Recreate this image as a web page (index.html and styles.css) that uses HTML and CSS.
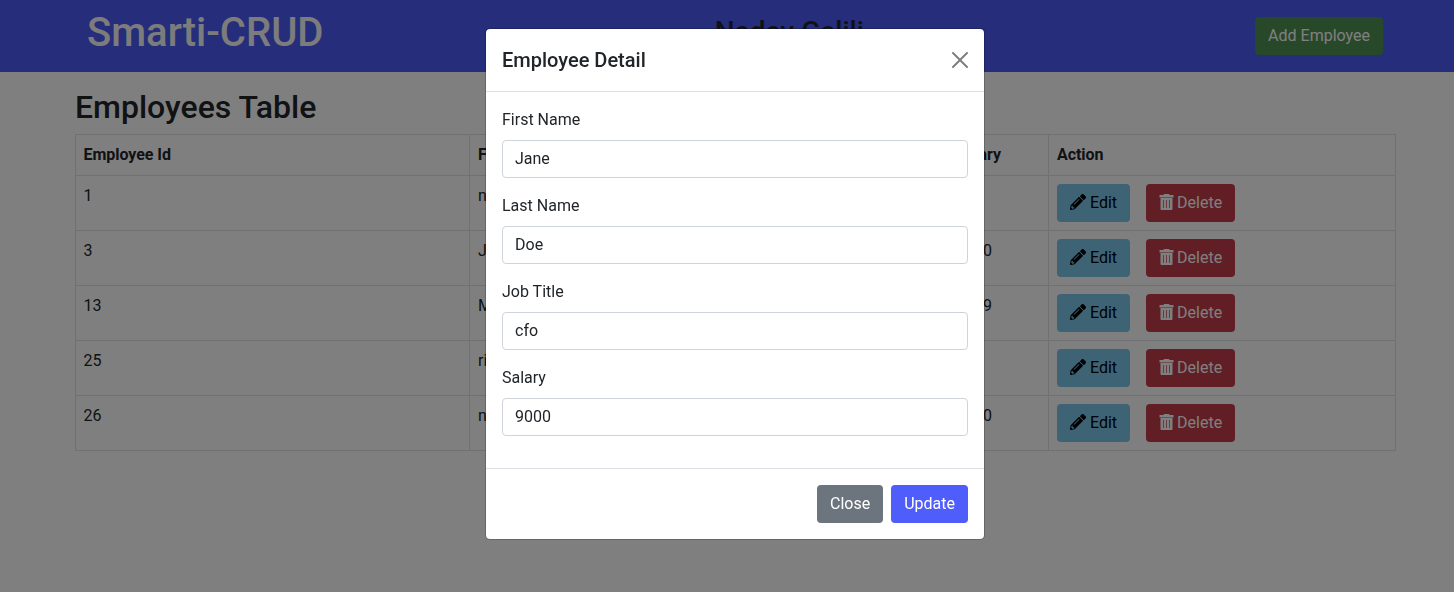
FILE: index.html
```html
<!DOCTYPE html>
<html lang="en">
<head>
<meta charset="utf-8">
<title>Smarti-CRUD</title>
<link rel="stylesheet" href="styles.css">
</head>
<body>
<svg class="sprite" aria-hidden="true">
  <symbol id="pencil" viewBox="0 0 512 512"><path d="M497.900 142.100l-46.100 46.100c-4.700 4.700-12.300 4.700-17 0l-111-111c-4.700-4.700-4.700-12.300 0-17l46.100-46.100c18.700-18.700 49.100-18.700 67.900 0l60.100 60.100c18.800 18.700 18.800 49.100 0 67.900zM284.200 99.800L21.600 362.400.4 483.900c-2.900 16.400 11.400 30.600 27.800 27.800l121.500-21.300 262.600-262.600c4.700-4.700 4.700-12.300 0-17l-111-111c-4.800-4.700-12.400-4.700-17.100 0zM124.100 339.900c-5.500-5.500-5.500-14.300 0-19.800l154-154c5.500-5.500 14.300-5.500 19.800 0s5.500 14.300 0 19.800l-154 154c-5.500 5.500-14.300 5.500-19.800 0zM88 424h48v36.300l-64.500 11.300-31.100-31.100L51.700 376H88v48z"/></symbol>
  <symbol id="trash" viewBox="0 0 15 16"><path fill-rule="evenodd" d="M5 0h5l.7 1H14.500v2.500H.5V1h3.800zM1.500 4h12v11q0 1-1 1h-10q-1 0-1-1zM4.200 6v8h.7V6zM7.150 6v8h.7V6zM10.100 6v8h.7V6z"/></symbol>
</svg>

<nav class="navbar">
  <h1 class="brand">Smarti-CRUD</h1>
  <h3 class="owner">Nadav Galili</h3>
  <button class="btn btn-success">Add Employee</button>
</nav>

<main class="content">
  <h2 class="heading">Employees Table</h2>
  <table class="table">
    <colgroup><col class="col-id"><col class="col-first"><col class="col-last"><col class="col-job"><col class="col-salary"><col class="col-action"></colgroup>
    <thead><tr><th>Employee Id</th><th>First Name</th><th>Last Name</th><th>Job Title</th><th>Salary</th><th>Action</th></tr></thead>
    <tbody>
      <tr><td>1</td><td>nadav</td><td>galili</td><td>ceo</td><td>900</td><td><div class="actions"><button class="btn btn-info"><svg class="icon"><use href="#pencil"/></svg> Edit</button><button class="btn btn-danger"><svg class="icon icon-trash"><use href="#trash"/></svg> Delete</button></div></td></tr>
      <tr><td>3</td><td>Jane</td><td>Doe</td><td>cfo</td><td>9000</td><td><div class="actions"><button class="btn btn-info"><svg class="icon"><use href="#pencil"/></svg> Edit</button><button class="btn btn-danger"><svg class="icon icon-trash"><use href="#trash"/></svg> Delete</button></div></td></tr>
      <tr><td>13</td><td>Moshe</td><td>Levi</td><td>cto</td><td>9999</td><td><div class="actions"><button class="btn btn-info"><svg class="icon"><use href="#pencil"/></svg> Edit</button><button class="btn btn-danger"><svg class="icon icon-trash"><use href="#trash"/></svg> Delete</button></div></td></tr>
      <tr><td>25</td><td>rina</td><td>cohen</td><td>dev</td><td>800</td><td><div class="actions"><button class="btn btn-info"><svg class="icon"><use href="#pencil"/></svg> Edit</button><button class="btn btn-danger"><svg class="icon icon-trash"><use href="#trash"/></svg> Delete</button></div></td></tr>
      <tr><td>26</td><td>noa</td><td>bar</td><td>dev</td><td>8000</td><td><div class="actions"><button class="btn btn-info"><svg class="icon"><use href="#pencil"/></svg> Edit</button><button class="btn btn-danger"><svg class="icon icon-trash"><use href="#trash"/></svg> Delete</button></div></td></tr>
    </tbody>
  </table>
</main>

<div class="backdrop">
  <div class="modal" role="dialog">
    <div class="modal-header">
      <h5 class="modal-title">Employee Detail</h5>
      <svg class="close" viewBox="0 0 16 16"><path d="M.293.293a1 1 0 011.414 0L8 6.586 14.293.293a1 1 0 111.414 1.414L9.414 8l6.293 6.293a1 1 0 01-1.414 1.414L8 9.414l-6.293 6.293a1 1 0 01-1.414-1.414L6.586 8 .293 1.707a1 1 0 010-1.414z"/></svg>
    </div>
    <div class="modal-body">
      <div class="field"><label for="first">First Name</label><input id="first" value="Jane"></div>
      <div class="field"><label for="last">Last Name</label><input id="last" value="Doe"></div>
      <div class="field"><label for="job">Job Title</label><input id="job" value="cfo"></div>
      <div class="field"><label for="salary">Salary</label><input id="salary" value="9000"></div>
    </div>
    <div class="modal-footer">
      <button class="btn btn-secondary">Close</button>
      <button class="btn btn-primary">Update</button>
    </div>
  </div>
</div>
</body>
</html>
```
FILE: styles.css
```css
* { box-sizing: border-box; }
body {
  margin: 0;
  height: 592px;
  overflow: hidden;
  font: 400 16px/24px Roboto, sans-serif;
  color: #212529;
  background: #fff;
}
h1, h2, h3, h5 { margin: 0; font-weight: 500; line-height: 1.2; }
.sprite { display: none; }
.navbar {
  display: flex;
  justify-content: space-between;
  align-items: flex-start;
  height: 72px;
  padding: 8px 71px 0 87px;
  background: #4c5af5;
}
.brand { font-size: 40px; margin-top: 1px; color: #f8f9fa; }
.owner { font-size: 28px; margin-top: 7px; }
.btn {
  display: inline-block;
  height: 38px;
  padding: 6px 12px;
  border: 1px solid transparent;
  border-radius: 4px;
  font: inherit;
  color: #fff;
  white-space: nowrap;
}
.btn-success { margin-top: 9px; background: #4f9052; }
.btn-info { background: #7ac6e8; color: #000; }
.btn-danger { background: #c23c4b; }
.btn-secondary { background: #6c757d; }
.btn-primary { background: #4f5dfa; }
.icon { width: 16px; height: 16px; fill: currentColor; vertical-align: -2px; }
.icon-trash { width: 15px; margin-right: -1px; }
.content { padding: 16px 58px 0 75px; }
.heading { font-size: 32px; margin-bottom: 8px; height: 38px; }
.table { width: 1321px; border-collapse: collapse; table-layout: fixed; }
.col-id { width: 394px; }
.col-first { width: 170px; }
.col-last { width: 160px; }
.col-job { width: 148px; }
.col-salary { width: 101px; }
.col-action { width: 347px; }
.table th, .table td {
  padding: 8px;
  border: 1px solid #dee2e6;
  text-align: left;
  vertical-align: top;
}
.table th { font-weight: 700; letter-spacing: -.05px; }
.table th:first-child, .table td:first-child { padding-left: 7.5px; }
.actions { display: flex; gap: 16px; }
.backdrop {
  position: fixed;
  inset: 0;
  display: flex;
  align-items: flex-start;
  padding: 28px 0 0 485px;
  background: rgba(0, 0, 0, .5);
}
.modal {
  width: 500px;
  border: 1px solid rgba(0, 0, 0, .2);
  border-radius: 5px;
  background: #fff;
  background-clip: padding-box;
}
.modal-header {
  display: flex;
  justify-content: space-between;
  align-items: center;
  height: 63px;
  padding: 0 16px;
  border-bottom: 1px solid #dee2e6;
}
.modal-title { font-size: 20px; line-height: 30px; }
.close { width: 16px; height: 16px; opacity: .5; }
.modal-body { padding: 16px; }
.field { margin-bottom: 16px; }
.field label { display: block; margin-bottom: 8px; }
.field input {
  display: block;
  width: 100%;
  height: 38px;
  padding: 5px 12px 7px;
  border: 1px solid #ced4da;
  border-radius: 4px;
  font: inherit;
  color: #212529;
}
.modal-footer {
  display: flex;
  justify-content: flex-end;
  gap: 8px;
  padding: 16px;
  border-top: 1px solid #dee2e6;
}
```
